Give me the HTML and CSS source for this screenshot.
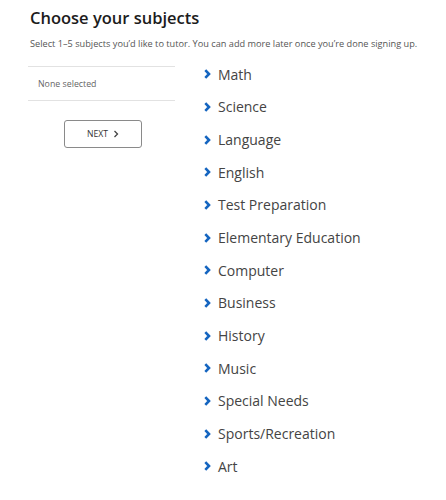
FILE: index.html
```html
<!DOCTYPE html>
<html>
<head>
<meta charset="utf-8">
<link rel="stylesheet" href="styles.css">
</head>
<body>
<div class="page">
  <h1 class="title">Choose your subjects</h1>
  <p class="subtitle">Select 1–5 subjects you’d like to tutor. You can add more later once you’re done signing up.</p>
  <div class="columns">
    <div class="side">
      <div class="selected">None selected</div>
      <div class="btn-wrap">
        <button class="next">NEXT <svg class="next-chev" width="6" height="8" viewBox="0 0 6 8"><polyline points="1.5,1 4.5,4 1.5,7" fill="none" stroke="#444" stroke-width="1.3"/></svg></button>
      </div>
    </div>
    <ul class="subjects">
      <li class="subject"><svg class="chev" width="7" height="10" viewBox="0 0 7 10"><polyline points="1.3,1.2 5,5 1.3,8.8" fill="none" stroke="#1565c0" stroke-width="2.6"/></svg>Math</li>
      <li class="subject"><svg class="chev" width="7" height="10" viewBox="0 0 7 10"><polyline points="1.3,1.2 5,5 1.3,8.8" fill="none" stroke="#1565c0" stroke-width="2.6"/></svg>Science</li>
      <li class="subject"><svg class="chev" width="7" height="10" viewBox="0 0 7 10"><polyline points="1.3,1.2 5,5 1.3,8.8" fill="none" stroke="#1565c0" stroke-width="2.6"/></svg>Language</li>
      <li class="subject"><svg class="chev" width="7" height="10" viewBox="0 0 7 10"><polyline points="1.3,1.2 5,5 1.3,8.8" fill="none" stroke="#1565c0" stroke-width="2.6"/></svg>English</li>
      <li class="subject"><svg class="chev" width="7" height="10" viewBox="0 0 7 10"><polyline points="1.3,1.2 5,5 1.3,8.8" fill="none" stroke="#1565c0" stroke-width="2.6"/></svg>Test Preparation</li>
      <li class="subject"><svg class="chev" width="7" height="10" viewBox="0 0 7 10"><polyline points="1.3,1.2 5,5 1.3,8.8" fill="none" stroke="#1565c0" stroke-width="2.6"/></svg>Elementary Education</li>
      <li class="subject"><svg class="chev" width="7" height="10" viewBox="0 0 7 10"><polyline points="1.3,1.2 5,5 1.3,8.8" fill="none" stroke="#1565c0" stroke-width="2.6"/></svg>Computer</li>
      <li class="subject"><svg class="chev" width="7" height="10" viewBox="0 0 7 10"><polyline points="1.3,1.2 5,5 1.3,8.8" fill="none" stroke="#1565c0" stroke-width="2.6"/></svg>Business</li>
      <li class="subject"><svg class="chev" width="7" height="10" viewBox="0 0 7 10"><polyline points="1.3,1.2 5,5 1.3,8.8" fill="none" stroke="#1565c0" stroke-width="2.6"/></svg>History</li>
      <li class="subject"><svg class="chev" width="7" height="10" viewBox="0 0 7 10"><polyline points="1.3,1.2 5,5 1.3,8.8" fill="none" stroke="#1565c0" stroke-width="2.6"/></svg>Music</li>
      <li class="subject"><svg class="chev" width="7" height="10" viewBox="0 0 7 10"><polyline points="1.3,1.2 5,5 1.3,8.8" fill="none" stroke="#1565c0" stroke-width="2.6"/></svg>Special Needs</li>
      <li class="subject"><svg class="chev" width="7" height="10" viewBox="0 0 7 10"><polyline points="1.3,1.2 5,5 1.3,8.8" fill="none" stroke="#1565c0" stroke-width="2.6"/></svg>Sports/Recreation</li>
      <li class="subject"><svg class="chev" width="7" height="10" viewBox="0 0 7 10"><polyline points="1.3,1.2 5,5 1.3,8.8" fill="none" stroke="#1565c0" stroke-width="2.6"/></svg>Art</li>
    </ul>
  </div>
</div>
</body>
</html>
```
FILE: styles.css
```css
* { box-sizing: border-box; }
html, body { margin: 0; padding: 0; background: #fff; }
body { font-family: "Open Sans", "Noto Sans", sans-serif; color: #333; }
.page { padding: 6px 0 0 30px; }
.title {
  margin: 0;
  font-size: 16.5px;
  line-height: 24px;
  font-weight: 600;
  color: #1c1c1c;
}
.subtitle {
  margin: 8px 0 0 0;
  font-size: 9.2px;
  line-height: 12px;
  color: #555;
  white-space: nowrap;
}
.columns {
  display: flex;
  margin-top: 5px;
}
.side {
  width: 147px;
  margin-left: -2px;
  padding-top: 11px;
}
.selected {
  border-top: 1px solid #e2e2e2;
  border-bottom: 1px solid #e2e2e2;
  height: 35px;
  display: flex;
  align-items: center;
  padding-left: 10px;
  font-size: 8.8px;
  color: #666;
}
.btn-wrap {
  display: flex;
  justify-content: center;
  padding-top: 19px;
  padding-left: 3px;
}
.next {
  width: 78px;
  height: 28px;
  background: #fff;
  border: 1px solid #8a8a8a;
  border-radius: 3px;
  font-family: "Open Sans", "Noto Sans", sans-serif;
  font-size: 8.6px;
  color: #333;
  display: flex;
  align-items: center;
  justify-content: center;
  gap: 5px;
  padding: 0;
}
.subjects {
  list-style: none;
  margin: 3px 0 0 29px;
  padding: 0;
}
.subject {
  height: 32.67px;
  display: flex;
  align-items: center;
  font-size: 14px;
  color: #444;
}
.chev { margin-right: 7px; flex: none; }
```
